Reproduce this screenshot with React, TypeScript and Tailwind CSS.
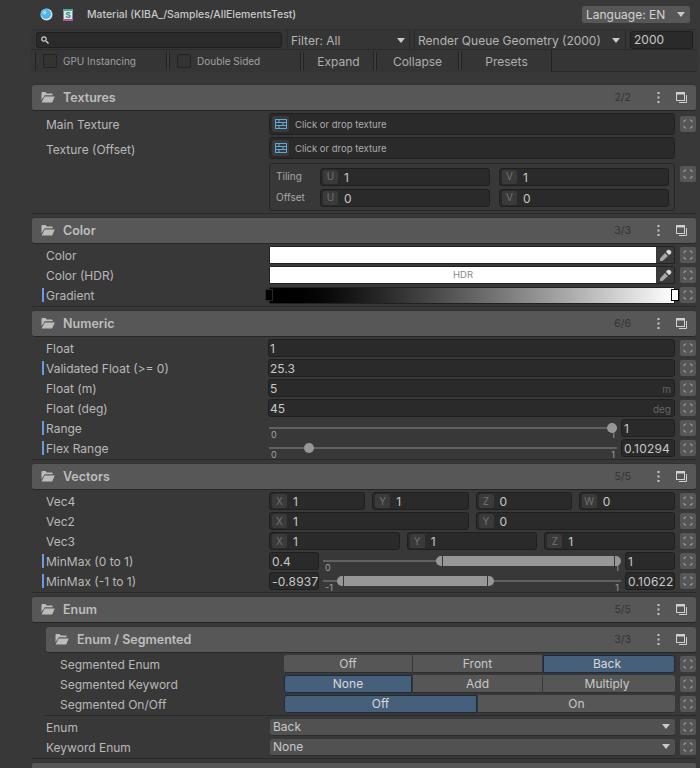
import type { ReactNode } from 'react'

const field = 'h-[18px] rounded-[3px] border border-[#1f1f1f] bg-[#2a2a2a] text-[12px] leading-[16px] text-[#c8c8c8]'

function FolderIcon() {
  return (
    <svg width="14" height="11" viewBox="0 0 14 11" className="shrink-0">
      <path d="M0.5 1 a1 1 0 0 1 1-1 h3 l1.2 1.5 h5 a1 1 0 0 1 1 1 v0.7 h-8 l-3.2 5 z" fill="#bcbcbc" />
      <path d="M3.6 4.4 h10.2 l-2.6 6.1 h-10.6 z" fill="#bcbcbc" />
    </svg>
  )
}

function DotsIcon() {
  return (
    <svg width="3" height="11" viewBox="0 0 3 11" className="shrink-0">
      <rect x="0.5" y="0" width="2" height="2" fill="#c8c8c8" />
      <rect x="0.5" y="4.5" width="2" height="2" fill="#c8c8c8" />
      <rect x="0.5" y="9" width="2" height="2" fill="#c8c8c8" />
    </svg>
  )
}

function WindowIcon() {
  return (
    <svg width="11" height="11" viewBox="0 0 11 11" className="shrink-0">
      <rect x="0.5" y="0.5" width="8" height="8" fill="none" stroke="#d0d0d0" />
      <rect x="0.5" y="0.5" width="8" height="2" fill="#d0d0d0" />
      <path d="M10.5 3 v7.5 h-7.5" fill="none" stroke="#d0d0d0" />
    </svg>
  )
}

function ResetIcon() {
  return (
    <svg width="10" height="10" viewBox="0 0 10 10">
      <path d="M0.7 3.2 a3 3 0 0 1 2.5-2.5 M6.8 0.7 a3 3 0 0 1 2.5 2.5 M9.3 6.8 a3 3 0 0 1-2.5 2.5 M3.2 9.3 a3 3 0 0 1-2.5-2.5" fill="none" stroke="#a0a0a0" strokeWidth="1.1" />
    </svg>
  )
}

function ResetButton() {
  return (
    <div className="flex h-[16px] w-[16px] shrink-0 items-center justify-center rounded-[2px] bg-[#565656]">
      <ResetIcon />
    </div>
  )
}

function Caret() {
  return (
    <svg width="8" height="5" viewBox="0 0 8 5" className="shrink-0">
      <path d="M0 0 h8 l-4 5 z" fill="#c8c8c8" />
    </svg>
  )
}

function Pipette() {
  return (
    <svg width="13" height="13" viewBox="0 0 13 13">
      <path d="M8 1.5 a1.6 1.6 0 0 1 3.5 3.5 l-1.5 1 -3-3 z" fill="#d8d8d8" />
      <path d="M6 4 l3 3 -5.5 5 h-2.5 v-2.5 z" fill="#a8a8a8" />
    </svg>
  )
}

function TextureIcon() {
  return (
    <svg width="12" height="10" viewBox="0 0 12 10">
      <rect x="0.5" y="0.5" width="11" height="9" fill="none" stroke="#5aa8d8" />
      <path d="M0 3.5 h12 M0 6.5 h12 M4 0 v3.5 M8 3.5 v3 M4 6.5 v3" stroke="#5aa8d8" />
    </svg>
  )
}

function Header({ title, count, indent = false }: { title: string; count: string; indent?: boolean }) {
  return (
    <div className={`flex h-[27px] items-center rounded-[3px] border-b border-[#262626] border-t border-t-[#333333] bg-[#575757] pl-[9px] pr-[9px] ${indent ? 'ml-[14px]' : ''}`}>
      <FolderIcon />
      <span className="ml-[8px] pt-[1px] text-[12.5px] font-semibold text-[#bebebe]">{title}</span>
      <span className="ml-auto pt-[1px] text-[10.5px] text-[#333333]">{count}</span>
      <div className="ml-[26px]"><DotsIcon /></div>
      <div className="ml-[16px]"><WindowIcon /></div>
    </div>
  )
}

function Row({ label, marked, deep, reset = true, children }: { label: string; marked?: boolean; deep?: boolean; reset?: boolean; children: ReactNode }) {
  return (
    <div className="flex h-[20px] items-center">
      <div className={`relative flex h-full shrink-0 items-center pt-[2px] ${deep ? 'w-[252px] pl-[28px]' : 'w-[237px] pl-[14px]'}`}>
        {marked && <div className="absolute left-[10px] top-[3px] h-[14px] w-[2px] bg-[#6a9be0]" />}
        <span className="whitespace-nowrap text-[12px] text-[#b8b8b8]">{label}</span>
      </div>
      <div className="min-w-0 flex-1">{children}</div>
      <div className="ml-[5px] w-[16px]">{reset && <ResetButton />}</div>
    </div>
  )
}

function Axis({ letter, value, className = 'flex-1' }: { letter: string; value: string; className?: string }) {
  return (
    <div className={`flex h-[18px] min-w-0 items-center rounded-[3px] border border-[#1f1f1f] bg-[#2a2a2a] pl-[2px] ${className}`}>
      <span className="flex h-[14px] w-[15px] shrink-0 items-center justify-center rounded-[2px] bg-[#3a3a3a] text-[10px] text-[#727272]">{letter}</span>
      <span className="ml-[6px] pt-[2px] text-[12px] leading-[14px] text-[#c8c8c8]">{value}</span>
    </div>
  )
}

function NumberField({ value, unit }: { value: string; unit?: string }) {
  return (
    <div className={`-ml-px flex items-start justify-between overflow-hidden pl-[1px] pr-[3px] pt-[1px] ${field}`}>
      <span>{value}</span>
      {unit && <span className="text-[10px] leading-[16px] text-[#646464]">{unit}</span>}
    </div>
  )
}

function Small({ value, width = 'w-[54px]' }: { value: string; width?: string }) {
  return (
    <div className={`shrink-0 overflow-hidden whitespace-nowrap px-[2px] pt-[1px] tracking-[0.2px] ${field} ${width}`}>{value}</div>
  )
}

function Slider({ pos, value }: { pos: number; value: string }) {
  return (
    <div className="flex items-center gap-[4px]">
      <div className="relative h-[20px] flex-1">
        <div className="absolute inset-x-0 top-[9px] h-[2px] bg-[#616161]" />
        <div className="absolute top-[5px] h-[10px] w-[10px] -translate-x-1/2 rounded-full bg-[#979797]" style={{ left: `${pos}px` }} />
        <span className="absolute left-[2px] top-[10px] text-[9px] text-[#a0a0a0]">0</span>
        <span className="absolute right-[2px] top-[10px] text-[9px] text-[#a0a0a0]">1</span>
      </div>
      <Small value={value} />
    </div>
  )
}

function RangeBar({ from, to, low, high, lowLabel }: { from: number; to: number; low: string; high: string; lowLabel: string }) {
  return (
    <div className="flex items-center">
      <Small value={low} width="w-[50px]" />
      <div className="relative mx-[4px] h-[20px] flex-1">
        <div className="absolute inset-x-0 top-[9px] h-[2px] bg-[#616161]" />
        <div className="absolute top-[5px] h-[10px] rounded-[5px] bg-[#979797]" style={{ left: `${from}px`, width: `${to - from}px` }} />
        <div className="absolute top-[5px] h-[10px] w-px bg-[#3a3a3a]" style={{ left: `${from + 6}px` }} />
        <div className="absolute top-[5px] h-[10px] w-px bg-[#3a3a3a]" style={{ left: `${to - 7}px` }} />
        <span className="absolute left-[2px] top-[10px] text-[9px] text-[#a0a0a0]">{lowLabel}</span>
        <span className="absolute right-[2px] top-[10px] text-[9px] text-[#a0a0a0]">1</span>
      </div>
      <Small value={high} width="w-[50px]" />
    </div>
  )
}

function TexturePicker() {
  return (
    <div className="flex h-[22px] items-center rounded-[3px] border border-[#1f1f1f] bg-[#2a2a2a] pl-[2px]">
      <span className="flex h-[16px] w-[17px] items-center justify-center rounded-[2px] bg-[#3a3a3a]">
        <TextureIcon />
      </span>
      <span className="ml-[6px] pt-[2px] text-[9.5px] text-[#aaaaaa]">Click or drop texture</span>
    </div>
  )
}

function ColorBar({ hdr }: { hdr?: boolean }) {
  return (
    <div className="flex h-[18px] rounded-[2px] border border-[#212121] bg-[#3a3a3a]">
      <div className="flex flex-1 items-center justify-center bg-white pt-[1px] text-[9.5px] text-[#8a8a8a]">{hdr && 'HDR'}</div>
      <div className="flex w-[18px] items-center justify-center"><Pipette /></div>
    </div>
  )
}

function Segments({ items, active, widths }: { items: string[]; active: number; widths: string[] }) {
  return (
    <div className="flex h-[18px] gap-px">
      {items.map((item, i) => (
        <div
          key={item}
          className={`flex items-center justify-center text-[12px] ${widths[i]} ${i === 0 ? 'rounded-l-[3px]' : ''} ${i === items.length - 1 ? 'rounded-r-[3px]' : ''} ${i === active ? 'border border-[#1c2c3c] bg-[#46607c] text-[#d8d8d8]' : 'border-b border-[#2e2e2e] bg-[#565656] text-[#c8c8c8]'}`}
        >
          {item}
        </div>
      ))}
    </div>
  )
}

function Dropdown({ value }: { value: string }) {
  return (
    <div className="ml-px flex h-[17px] items-center justify-between rounded-[3px] border-b border-[#2c2c2c] bg-[#515151] pl-[3px] pr-[5px] text-[12px] text-[#c8c8c8]">
      {value}
      <Caret />
    </div>
  )
}

function Divider({ inset }: { inset?: boolean }) {
  return <div className={`h-px bg-[#2a2a2a] ${inset ? 'ml-[13px]' : ''}`} />
}

export default function App() {
  return (
    <div className="h-[768px] w-[700px] overflow-hidden bg-[#383838] font-[Inter,'Noto_Sans',sans-serif]">
      <div className="flex h-[29px] items-center pl-[40px] pr-[10px]">
        <svg width="13" height="13" viewBox="0 0 13 13" className="shrink-0">
          <circle cx="6.5" cy="6.5" r="6" fill="#d8e4ea" />
          <circle cx="6" cy="6" r="5" fill="#4fb4ea" />
          <circle cx="4.5" cy="4.5" r="2" fill="#9ad8f8" />
        </svg>
        <div className="ml-[10px] flex h-[12px] w-[10px] shrink-0 items-center justify-center bg-gradient-to-b from-[#3fae8e] to-[#b84aa8]">
          <span className="bg-[#d8e8e8] px-[1px] text-[8px] leading-[8px] font-bold text-[#2a8080]">S</span>
        </div>
        <span className="ml-[14px] pt-[1px] text-[10.45px] font-medium text-[#c8c8c8]">Material (KIBA_/Samples/AllElementsTest)</span>
        <div className="ml-auto flex h-[17px] w-[108px] items-center justify-between rounded-[2px] bg-[#575757] pl-[4px] pr-[5px] text-[12px] text-[#d2d2d2]">
          Language: EN
          <Caret />
        </div>
      </div>

      <div className="ml-[31px] mr-[3px] bg-[#353535]">
        <div className="flex h-[21px] items-center border-t border-[#303030] border-b border-b-[#2b2b2b] pl-[5px] pr-[4px]">
          <div className="flex h-[16px] w-[246px] shrink-0 items-center rounded-[3px] border border-[#1f1f1f] bg-[#2a2a2a] pl-[4px]">
            <svg width="8" height="8" viewBox="0 0 8 8">
              <circle cx="3" cy="3" r="2.2" fill="none" stroke="#d0d0d0" strokeWidth="1.2" />
              <path d="M5 5 l2.5 2.5" stroke="#d0d0d0" strokeWidth="1.4" />
            </svg>
          </div>
          <div className="ml-[5px] flex h-full w-[123px] shrink-0 items-center justify-between border-x border-[#2b2b2b] pl-[3px] pr-[4px] pt-[2px] text-[12px] text-[#b4b4b4]">
            Filter: All
            <Caret />
          </div>
          <div className="ml-[4px] flex h-full w-[212px] shrink-0 items-center justify-between border-x border-[#2b2b2b] pl-[3px] pr-[5px] pt-[2px] text-[12px] text-[#b4b4b4]">
            <span className="whitespace-nowrap">Render Queue Geometry (2000)</span>
            <Caret />
          </div>
          <div className="flex h-full flex-1 items-center pl-[4px]">
            <div className={`w-full px-[3px] ${field}`}>2000</div>
          </div>
        </div>
        <div className="flex h-[22px] items-stretch">
          <div className="my-[2px] w-[5px] border-r border-[#222222]" />
          <div className="flex w-[130px] items-center pl-[7px] text-[10px] text-[#a0a0a0]">
            <span className="h-[14px] w-[14px] rounded-[2px] border border-[#232323] bg-[#333333]" />
            <span className="ml-[6px] pt-[1px]">GPU Instancing</span>
          </div>
          <div className="my-[2px] w-[4px] border-x border-[#222222] bg-[#3c3c3c]" />
          <div className="flex w-[130px] items-center pl-[7px] text-[10px] text-[#a0a0a0]">
            <span className="h-[14px] w-[14px] rounded-[2px] border border-[#232323] bg-[#333333]" />
            <span className="ml-[6px] pt-[1px]">Double Sided</span>
          </div>
          <div className="my-[2px] w-[4px] border-x border-[#222222] bg-[#3c3c3c]" />
          <div className="flex w-[69px] items-center justify-center pt-[2px] text-[12px] text-[#aeaeae]">Expand</div>
          <div className="my-[2px] w-[4px] border-x border-[#222222] bg-[#3c3c3c]" />
          <div className="flex w-[81px] items-center justify-center pt-[2px] text-[12px] text-[#aeaeae]">Collapse</div>
          <div className="my-[2px] w-[4px] border-x border-[#222222] bg-[#3c3c3c]" />
          <div className="flex w-[90px] items-center justify-center border-r border-[#222222] pt-[2px] text-[12px] text-[#aeaeae]">Presets</div>
          <div className="flex-1 border-b border-[#2b2b2b]" />
        </div>
      </div>

      <div className="ml-[32px] mr-[4px] mt-[12px] flex flex-col">
        <Header title="Textures" count="2/2" />
        <div className="pt-[1px]">
          <div className="flex h-[24px] items-center">
            <span className="w-[237px] shrink-0 pl-[14px] pt-[2px] text-[12px] text-[#b8b8b8]">Main Texture</span>
            <div className="min-w-0 flex-1"><TexturePicker /></div>
            <div className="ml-[5px] w-[16px]"><ResetButton /></div>
          </div>
          <div className="flex h-[24px] items-center">
            <span className="w-[237px] shrink-0 pl-[14px] pt-[4px] text-[12px] text-[#b8b8b8]">Texture (Offset)</span>
            <div className="min-w-0 flex-1"><TexturePicker /></div>
            <div className="ml-[5px] w-[16px]" />
          </div>
          <div className="mt-[3px] flex items-start">
            <div className="w-[237px] shrink-0" />
            <div className="flex h-[48px] min-w-0 flex-1 flex-col justify-center gap-[3px] rounded-[3px] border border-[#262626] px-[5px]">
              <div className="flex items-center">
                <span className="w-[45px] shrink-0 pl-[1px] text-[10px] text-[#a8a8a8]">Tiling</span>
                <div className="flex flex-1 gap-[9px]"><Axis letter="U" value="1" /><Axis letter="V" value="1" /></div>
              </div>
              <div className="flex items-center">
                <span className="w-[45px] shrink-0 pl-[1px] text-[10px] text-[#a8a8a8]">Offset</span>
                <div className="flex flex-1 gap-[9px]"><Axis letter="U" value="0" /><Axis letter="V" value="0" /></div>
              </div>
            </div>
            <div className="ml-[5px] mt-[3px] w-[16px]"><ResetButton /></div>
          </div>
        </div>
        <div className="mb-[3px] mt-[2px]"><Divider /></div>

        <Header title="Color" count="3/3" />
        <div className="pt-[1px]">
          <Row label="Color"><ColorBar /></Row>
          <Row label="Color (HDR)"><ColorBar hdr /></Row>
          <Row label="Gradient" marked>
            <div className="relative h-[17px] rounded-[1px] border border-[#212121] bg-gradient-to-r from-black to-white">
              <div className="absolute left-[-5px] top-[1px] h-[12px] w-[8px] border border-[#2a2a2a] bg-black" />
              <div className="absolute right-[-5px] top-[1px] h-[12px] w-[8px] border border-black bg-white" />
            </div>
          </Row>
        </div>
        <div className="mb-[3px] mt-[1px]"><Divider /></div>

        <Header title="Numeric" count="6/6" />
        <div className="pt-[1px]">
          <Row label="Float"><NumberField value="1" /></Row>
          <Row label="Validated Float (>= 0)" marked><NumberField value="25.3" /></Row>
          <Row label="Float (m)"><NumberField value="5" unit="m" /></Row>
          <Row label="Float (deg)"><NumberField value="45" unit="deg" /></Row>
          <Row label="Range" marked><Slider pos={343} value="1" /></Row>
          <Row label="Flex Range" marked><Slider pos={40} value="0.10294" /></Row>
        </div>
        <div className="mb-[3px] mt-[1px]"><Divider /></div>

        <Header title="Vectors" count="5/5" />
        <div className="pt-[1px]">
          <Row label="Vec4">
            <div className="flex gap-[7px]"><Axis letter="X" value="1" /><Axis letter="Y" value="1" /><Axis letter="Z" value="0" /><Axis letter="W" value="0" /></div>
          </Row>
          <Row label="Vec2">
            <div className="flex gap-[7px]"><Axis letter="X" value="1" /><Axis letter="Y" value="0" /></div>
          </Row>
          <Row label="Vec3">
            <div className="flex gap-[7px]"><Axis letter="X" value="1" /><Axis letter="Y" value="1" /><Axis letter="Z" value="1" /></div>
          </Row>
          <Row label="MinMax (0 to 1)" marked><RangeBar from={113} to={298} low="0.4" high="1" lowLabel="0" /></Row>
          <Row label="MinMax (-1 to 1)" marked><RangeBar from={14} to={171} low="-0.8937" high="0.10622" lowLabel="-1" /></Row>
        </div>
        <div className="mb-[3px] mt-[1px]"><Divider /></div>

        <Header title="Enum" count="5/5" />
        <div className="mt-[3px]">
          <Header title="Enum / Segmented" count="3/3" indent />
          <div className="pt-[1px]">
            <Row label="Segmented Enum" deep>
              <Segments items={['Off', 'Front', 'Back']} active={2} widths={['w-[128px]', 'w-[129px]', 'flex-1 pr-[4px]']} />
            </Row>
            <Row label="Segmented Keyword" deep>
              <Segments items={['None', 'Add', 'Multiply']} active={0} widths={['w-[128px]', 'w-[129px]', 'flex-1 pr-[4px]']} />
            </Row>
            <Row label="Segmented On/Off" deep>
              <Segments items={['Off', 'On']} active={0} widths={['w-[193px]', 'flex-1']} />
            </Row>
          </div>
          <div className="mb-[1px] mt-[1px]"><Divider inset /></div>
          <Row label="Enum"><Dropdown value="Back" /></Row>
          <Row label="Keyword Enum"><Dropdown value="None" /></Row>
        </div>
        <div className="mb-[3px] mt-[1px]"><Divider /></div>
        <div className="h-[27px] rounded-[3px] border-t border-[#333333] bg-[#575757]" />
      </div>
    </div>
  )
}
